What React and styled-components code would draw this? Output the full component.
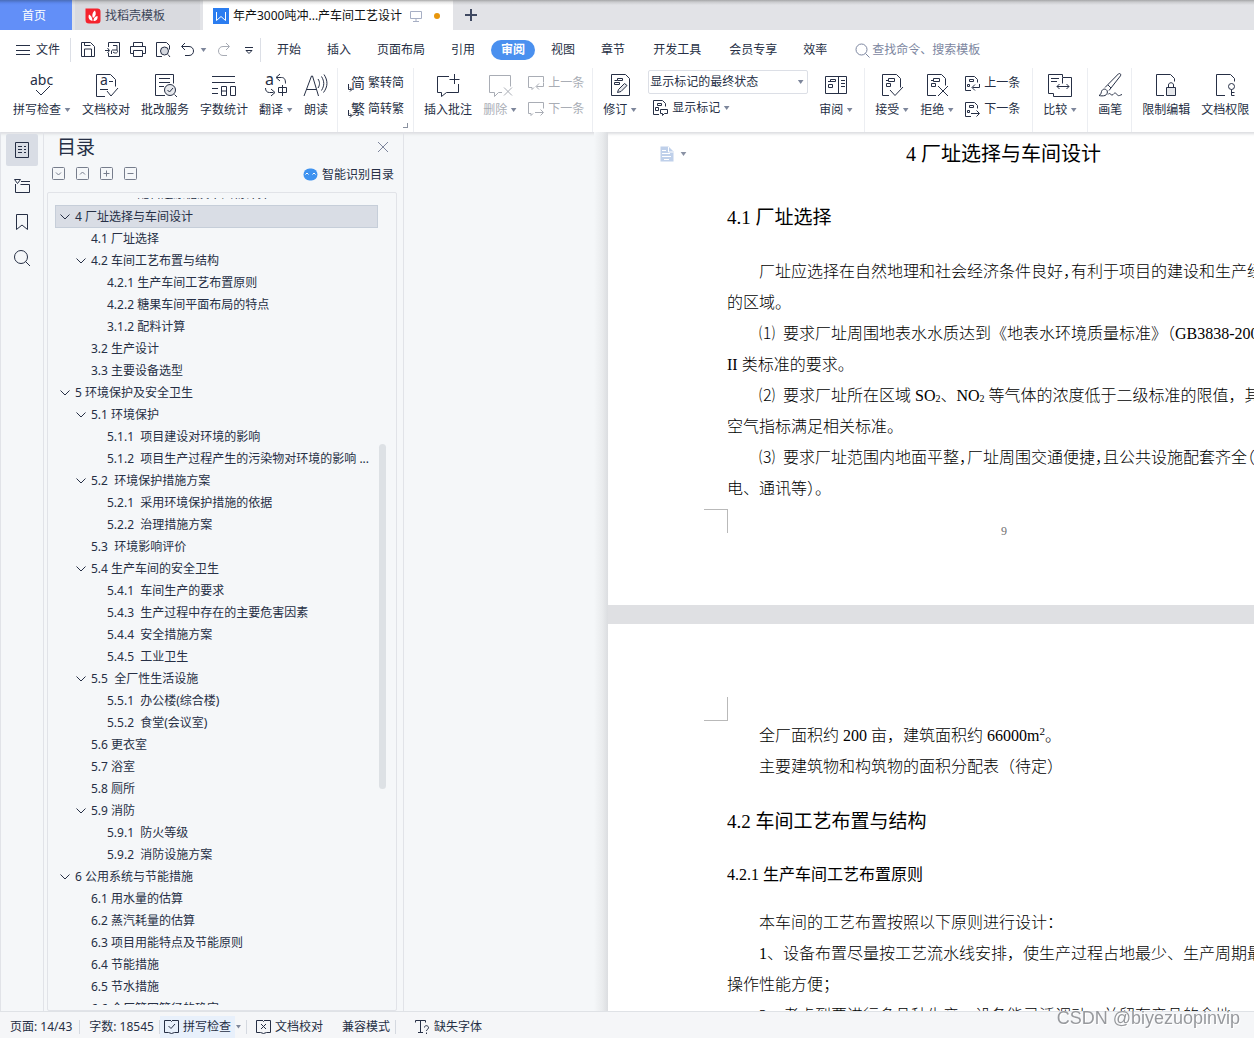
import React from 'react';
import styled, { createGlobalStyle, css } from 'styled-components';

const GlobalStyle = createGlobalStyle`
  * {
    box-sizing: border-box;
  }
  html, body, #root {
    height: 100%;
  }
  body {
    margin: 0;
    overflow: hidden;
    font-family: "Noto Sans", "Noto Sans CJK SC", sans-serif;
    font-size: 12px;
    line-height: 16px;
    color: #262f45;
  }
  button, input, select {
    font: inherit;
    color: inherit;
    background: none;
    border: 0;
    padding: 0;
    margin: 0;
    white-space: pre;
  }
  h1, h2, h3, p, ul {
    margin: 0;
    padding: 0;
    font-weight: 400;
    list-style: none;
  }
  svg {
    display: block;
    flex: none;
    overflow: visible;
  }
`

const Window = styled.div`
  display: flex;
  flex-direction: column;
  height: 100vh;
  overflow: hidden;
  background: #f5f7f9;
`

/* ---------- tab strip ---------- */

const TabStrip = styled.div`
  display: flex;
  flex: none;
  gap: 3px;
  height: 30px;
  background: linear-gradient(#a4a5a7, #c9cacd 2px, #e2e3e7 5px);
`
const HomeTab = styled.button`
  width: 72px;
  padding: 2px 4px 0 0;
  color: #fff;
  background: linear-gradient(#4a6db8, #5b87ee 3px, #628ff8 5px);
`
const FileTab = styled.button`
  display: flex;
  align-items: center;
  gap: 4px;
  height: 30px;
  padding: 2px 0 0 10px;
  width: ${props => (props.$active ? 250 : 125)}px;
  color: ${props => (props.$active ? '#111' : '#3d4659')};
  background: ${props => (props.$active
    ? 'linear-gradient(#a9a9a9, #e4e4e4 2px, #fff 5px)'
    : 'linear-gradient(#9c9da0, #c4c5c8 2px, #d9dadf 5px)')};
`
const TabTitle = styled.span`
  flex: ${props => (props.$grow ? 1 : 'none')};
  text-align: left;
`
const UnsavedDot = styled.span`
  width: 6px;
  height: 6px;
  margin: 0 13px 0 8px;
  border-radius: 50%;
  background: #e8960c;
`
const NewTab = styled.button`
  display: grid;
  place-items: center;
  width: 30px;
`

/* ---------- menu row ---------- */

const MenuRow = styled.div`
  display: flex;
  flex: none;
  align-items: center;
  height: 38px;
  padding: 2px 0 0 15px;
  background: #fff;
`
const FileMenu = styled.button`
  display: flex;
  align-items: center;
  gap: 5px;
  height: 24px;
  padding-right: 10px;
  border-right: 1px solid #dcdfe6;
`
const QuickBar = styled.div`
  display: flex;
  align-items: center;
  gap: 9px;
  height: 24px;
  padding: 0 3px 0 9px;
  border-right: 1px solid #dcdfe6;
`
const QuickButton = styled.button`
  display: flex;
  align-items: center;
  gap: 4px;
  opacity: ${props => (props.$faded ? 0.4 : 1)};
`
const MenuTabs = styled.nav`
  display: flex;
  gap: 6px;
  padding: 0 18px 0 6px;
`
const MenuTab = styled.button`
  height: 20px;
  padding: 0 10px;
  border-radius: 10px;
  margin-left: ${props => (props.$wide ? 2 : 0)}px;
  ${props => props.$active && css`
    color: #fff;
    font-weight: 700;
    background: #4a90ef;
  `}
`
const SearchLabel = styled.label`
  display: flex;
  align-items: center;
  gap: 2px;
  flex: 1;
  color: #7c86a0;
`
const SearchInput = styled.input`
  flex: 1;
  outline: 0;
  &::placeholder {
    color: #7c86a0;
    opacity: 1;
  }
`

/* ---------- ribbon ---------- */

const Ribbon = styled.div`
  position: relative;
  display: flex;
  flex: none;
  height: 64px;
  padding-left: 3px;
  overflow: hidden;
  background: #fff;
`
const Group = styled.div`
  position: relative;
  display: flex;
  flex: none;
  gap: 11px;
  padding: 5px ${props => props.$end || 9}px 0 10px;
  border-right: 1px solid #eceef2;
`
const Tool = styled.button`
  display: flex;
  flex-direction: column;
  align-items: center;
  gap: 5px;
  height: 56px;
  color: ${props => (props.$disabled ? '#a9adb5' : 'inherit')};
`
const ToolLabel = styled.span`
  display: flex;
  align-items: center;
  gap: 3px;
`
const ToolStack = styled.div`
  display: flex;
  flex-direction: column;
  gap: 10px;
  padding-top: 2px;
`
const SmallTool = styled.button`
  display: flex;
  align-items: center;
  gap: 4px;
  height: 16px;
  color: ${props => (props.$disabled ? '#a9adb5' : 'inherit')};
`
const MarkupStack = styled.div`
  display: flex;
  flex-direction: column;
  gap: 6px;
`
const SelectBox = styled.label`
  display: flex;
  align-items: center;
  width: 160px;
  height: 24px;
  margin-top: -3px;
  padding: 0 3px 0 1px;
  border: 1px solid #dcdfe6;
  border-radius: 2px;
`
const Select = styled.select`
  flex: 1;
  appearance: none;
  outline: 0;
`
const MarkupButton = styled(SmallTool)`
  margin-left: 4px;
`
const Corner = styled.span`
  position: absolute;
  right: 5px;
  bottom: 4px;
  width: 5px;
  height: 5px;
  border: solid #8a91a0;
  border-width: 0 1px 1px 0;
`
const CaretShape = styled.span`
  width: 7px;
  height: 4px;
  background: #7d869b;
  clip-path: polygon(10% 0, 90% 0, 50% 100%);
`

/* ---------- body ---------- */

const Body = styled.div`
  display: flex;
  flex: 1;
  min-height: 0;
  box-shadow: inset 0 4px 3px -2px #dcdde0;
`
const Rail = styled.nav`
  display: flex;
  flex: none;
  flex-direction: column;
  gap: 4px;
  width: 44px;
  padding: 2px 5px;
  border: solid #e1e3e8;
  border-width: 0 1px;
`
const RailButton = styled.button`
  display: grid;
  place-items: center;
  width: 32px;
  height: 32px;
  border-radius: 2px;
  background: ${props => (props.$active ? '#d9dde5' : 'none')};
`
const Panel = styled.aside`
  display: flex;
  flex: none;
  flex-direction: column;
  width: 360px;
  padding: 0 6px 0 3px;
  border-right: 1px solid #e1e3e8;
`
const PanelHeader = styled.div`
  display: flex;
  align-items: center;
  justify-content: space-between;
  height: 30px;
  padding: 0 8px 0 10px;
`
const PanelTitle = styled.h2`
  font-size: 19px;
  line-height: 28px;
`
const PanelTools = styled.div`
  display: flex;
  align-items: center;
  gap: 11px;
  height: 30px;
  padding: 0 3px 7px 5px;
`
const SmartButton = styled.button`
  display: flex;
  align-items: center;
  gap: 4px;
  margin-left: auto;
  padding-top: 2px;
`
const TreeBox = styled.div`
  display: flex;
  flex: 1;
  gap: 1px;
  min-height: 0;
  padding: 5px 10px 5px 7px;
  border: 1px solid #e1e3e8;
  border-radius: 2px;
`
const TreeList = styled.ul`
  display: flex;
  flex: 1;
  flex-direction: column;
  justify-content: center;
  min-width: 0;
  overflow: hidden;
`
const TreeItem = styled.button`
  display: flex;
  align-items: center;
  gap: 5px;
  width: 100%;
  height: ${props => (props.$selected ? 23 : 22)}px;
  padding-left: ${props => props.$level * 16 - 12}px;
  border: 1px solid ${props => (props.$selected ? '#c6ced9' : 'transparent')};
  background: ${props => (props.$selected ? '#d9dde5' : 'none')};
`
const Twisty = styled.span`
  display: flex;
  justify-content: center;
  width: 10px;
`
const ScrollTrack = styled.div`
  display: flex;
  flex-direction: column;
  width: 7px;
`
const ScrollSpace = styled.div`
  flex: ${props => props.$weight};
`
const ScrollThumb = styled.div`
  flex: 344;
  border-radius: 4px;
  background: #dde1e5;
`

/* ---------- document ---------- */

const Canvas = styled.main`
  display: flex;
  flex: 1;
  min-width: 0;
  overflow: hidden;
  padding-left: 190px;
`
const PageEdge = styled.div`
  flex: none;
  width: 14px;
  background: linear-gradient(90deg, #f5f7f9, #e9ebed 60%, #dbdde0);
`
const Pages = styled.div`
  display: flex;
  flex: none;
  flex-direction: column;
  gap: 19px;
  width: 791px;
  background: #dfe0e3;
`
const Page = styled.article`
  flex: none;
  padding: 0 119px;
  background: #fff;
  box-shadow: ${props => (props.$first ? 'inset 0 4px 3px -2px #dcdde0' : 'none')};
  color: #000;
  font-family: "Liberation Serif", "Noto Sans CJK SC", serif;
  font-size: 16px;
  line-height: 31px;
  white-space: pre;
`
const TitleRow = styled.div`
  display: grid;
  grid-template-columns: 1fr auto 1fr;
  align-items: center;
  height: 44px;
  margin-left: -67px;
  margin-right: -67px;
`
const Chapter = styled.h1`
  font-size: 20px;
  line-height: 28px;
`
const PasteMark = styled.button`
  display: flex;
  align-items: center;
  gap: 6px;
  opacity: 0.9;
`
const Section = styled.h2`
  font-size: 19px;
  line-height: 28px;
  padding: ${props => props.$pad};
`
const SubSection = styled.h3`
  font-size: 16px;
  line-height: 28px;
  padding: 25px 0 18px;
`
const Line = styled.p`
  padding-left: ${props => (props.$indent ? 32 : 0)}px;
  font-weight: 300;
`
const Sub = styled.sub`
  font-size: 10px;
  line-height: 0;
  vertical-align: -1px;
`
const Sup = styled.sup`
  font-size: 11px;
  line-height: 0;
`
/* punctuation set in half an em */
const Half = styled.span`
  font-feature-settings: "halt";
`
const Footer = styled.footer`
  display: flex;
  height: 96px;
  margin: 5px 0 0 -23px;
`
const CropMark = styled.div`
  width: 24px;
  height: 24px;
  border: solid #b9b9b9;
  border-width: ${props => (props.$top ? '0 1px 1px 0' : '1px 1px 0 0')};
`
const TopMargin = styled.div`
  height: 96px;
  margin-left: -23px;
  padding-top: 73px;
`
const PageNumber = styled.span`
  flex: 1;
  padding-top: 8px;
  text-align: center;
  font-size: 12px;
  line-height: 28px;
  color: #707070;
`

/* ---------- status bar ---------- */

const StatusBar = styled.footer`
  display: flex;
  flex: none;
  align-items: center;
  height: 27px;
  padding: 3px 0 0 10px;
  border-top: 1px solid #dfe2e6;
  background: #f5f6f8;
`
const StatusItem = styled.button`
  display: flex;
  align-items: center;
  gap: 4px;
  height: 22px;
  padding: 0 4px;
  background: ${props => (props.$on ? '#e8f0fb' : 'none')};
`
const StatusText = styled.span`
  white-space: pre;
`
const StatusSep = styled.span`
  width: 1px;
  height: 14px;
  margin: 0 ${props => props.$after}px 0 ${props => props.$before}px;
  background: #d5d9e0;
`
const StatusMode = styled(StatusText)`
  margin-left: 15px;
`
const Watermark = styled.div`
  position: fixed;
  right: 14px;
  bottom: 8px;
  color: #97999d;
  font: 18px/24px "Liberation Sans", sans-serif;
  text-shadow: 1px 1px 0 #fff;
`

/* ---------- icons ---------- */

const Svg = ({ w = 24, h = 24, children }) => (
  <svg width={w} height={h} viewBox={`0 0 ${w} ${h}`} fill="none" stroke="currentColor" aria-hidden="true">
    {children}
  </svg>
)

const Glyph = ({ x, y, size, children }) => (
  <text x={x} y={y} fontSize={size} fill="currentColor" stroke="none">{children}</text>
)

const MiniDoc = () => (
  <path d="M8.5 5.5h6v3h-6zM6.5 10.5h4v3h-4zM6 7.5h2" />
)

const icons = {
  spell: <Svg><Glyph x={0} y={12} size={14}>abc</Glyph><path d="M6 17l5 5 9-9" /></Svg>,
  proof: <Svg><path d="M11 23.5H2.5v-22h14l5 5v7M6 16.5h8M13 18l4 5 7-8M15 8.5h4" /><Glyph x={6} y={12} size={14}>a</Glyph></Svg>,
  batch: <Svg><path d="M12 22.5H2.5v-21h18v9M6 5.5h11M6 9.5h11M6 13.5h5M21.5 21.5l2.500 2.500" /><circle cx="17" cy="17" r="5.500" fill="#e6e8ec" /><path d="M14.500 17l2 2 3.500-4" /></Svg>,
  count: <Svg><path d="M0 3.500h23M0 9.500h23M0 15.500h6M0 20.500h6M9.500 13.500h5v9h-5zM9.500 18h5M18.500 13.500h5v9h-5z" /></Svg>,
  translate: <Svg><Glyph x={1} y={12} size={16}>a</Glyph><path d="M16 1l-4 3.500 4 3.500M12.500 4.500h5c3 0 4 2 4 6M1.500 15c0 3 1.500 4.500 4 4.500h4M7 16l4 3.500-4 3.500M14.500 14.500h8v5h-8zM18.500 12v11" /></Svg>,
  read: <Svg><path d="M0 23L7.500 3h1l6 20M3 16.500h9M14 6c2 3 2 6 0 9M17.500 3.500c3 5 3 9 0 14M20 1.500c4 6 4 12-.5 18" /></Svg>,
  toSimple: <Svg w={16} h={16}><Glyph x={3} y={13} size={14}>简</Glyph><path d="M.5 9v5.500h3M2 12.500l2 2-2 2" /></Svg>,
  toTrad: <Svg w={16} h={16}><Glyph x={3} y={13} size={14}>繁</Glyph><path d="M.5 9v5.500h3M2 12.500l2 2-2 2" /></Svg>,
  comment: <Svg><path d="M13 3.500H1.500v16h4v4l5-4h12V11M18.500 1v10M13.500 6.500h10" /></Svg>,
  deleteComment: <Svg><path d="M14 19.500h-3.500l-4 4v-4h-5v-17h21v11M16 14.500l8 8M24 14.500l-8 8" /></Svg>,
  prevComment: <Svg w={16} h={16}><path d="M6 12.500l-2 2v-2H.500V1.500h15v6M15.500 8v3.500h-7M11 8.500l-3 3 3 3" /></Svg>,
  nextComment: <Svg w={16} h={16}><path d="M5 12.500l-2 2v-2H.500V1.500h15v6M7 11.500h8M12.500 8.500l3 3-3 3" /></Svg>,
  track: <Svg><path d="M3.500 1.500h14l4 4v17h-18z" /><path d="M9.500 5.500h5v2h-5zM6.500 9.500h5v2h-5zM6.500 7.500h3" /><path d="M9.500 19.500l1-3 6-6 2.500 2-6 6z" fill="#e6e8ec" /></Svg>,
  markup: <Svg w={16} h={16}><path d="M7 14.500H1.500V.5h9l3 3v3M5.500 3.500h4v2h-4zM3.500 7.500h3v3h-3zM8.500 9.500h7v4h-3l-2 2v-2h-2z" /></Svg>,
  pane: <Svg><path d="M1.500 3.500h21v17h-21zM14.500 3.500v17M17 7.500h4M17 10.500h4M17 13.500h4M6.500 6.500h5v2h-5zM4.500 11.500h4v3h-4zM4 8.500h3" /></Svg>,
  accept: <Svg><path d="M9 22.500H2.500v-21h14l4 4v9M10 17l5 5.500 8-8.500" /><MiniDoc /></Svg>,
  reject: <Svg><path d="M11 22.500H2.500v-21h14l4 4v7M13 13l10 10M23 13L13 23" /><MiniDoc /></Svg>,
  prevChange: <Svg w={15} h={16}><path d="M6 15.500H.5v-14h9l3 3v3M4.500 4.500h4v2h-4zM2.500 9.500h2v2h-2zM14.500 9v3.500h-7M10 9.500l-3 3 3 3" /></Svg>,
  nextChange: <Svg w={15} h={16}><path d="M6 15.500H.5v-14h9l3 3v3M4.500 4.500h4v2h-4zM2.500 9.500h2v2h-2zM6 12.500h8M11.500 9.500l3 3-3 3" /></Svg>,
  compare: <Svg><path d="M14.500 4V1.500H.500v19h5M3 5.500h8M3 8.500h6M14.500 4.500h9v19h-18v-3M14.500 4.500v6M9 13.500h12M11.500 11l-2.500 2.500 2.500 2.500M18.500 11l2.500 2.500-2.500 2.500" /></Svg>,
  brush: <Svg><path d="M1 22.500c2-1 2-2 2.500-4 1-3 4-3 5.500-1 1 2 0 4-2 5-2 .5-4 .5-6 0zM7 14.500L20.500.8c1.500-.8 2.800.4 2 2L11 17.500M10 12l3 3M10 21.500c2-3 3 2 5 0s2-2 4 0 2 1 5 0" /></Svg>,
  lock: <Svg><path d="M10 22.500H2.500v-21h14l4 4v3" /><path d="M12.500 14.500h9v8h-9z" fill="#e6e8ec" /><path d="M14.500 14v-2c0-3 5-3 5 0v2" /></Svg>,
  permission: <Svg><path d="M12 22.500H3.500v-21h14l4 4v3" /><circle cx="18.500" cy="13.500" r="3" /><path d="M18.500 16.500v6h3M18.500 19.500h3" /></Svg>,
}

const quickIcons = [
  { name: '保存', d: 'M1.500.5h9l4 4v10h-13zM4.500 14v-7h7v7M4.500 .5v3h6' },
  { name: '输出为PDF', d: 'M3.500 5V.5h11v14h-11V11M0 8.500h4M2.500 6l2 2.500-2 2.500M6.500 12V8.500M8 3.500h4v4.500H7M12 8c2 3-2 4-4 2' },
  { name: '打印', d: 'M3.500 4V.5h9V4M3 11.500H.500v-7h15v7H13M3.500 8.500h9v6h-9z' },
  { name: '打印预览', d: 'M7 14.500H1.500V.5h10l3 3v4M13 12.500l2 2.500', circle: true },
]

const Caret = () => <CaretShape aria-hidden="true" />

const Big = ({ icon, label, caret, disabled }) => (
  <Tool $disabled={disabled}>
    {icons[icon]}
    <ToolLabel>{label}{caret && <Caret />}</ToolLabel>
  </Tool>
)

const Small = ({ icon, label, disabled }) => (
  <SmallTool $disabled={disabled}>{icons[icon]}{label}</SmallTool>
)

const menuTabs = ['开始', '插入', '页面布局', '引用', '审阅', '视图', '章节', '开发工具', '会员专享', '效率']

// [level, label, has children]
const outline = [
  [3, '3.1.1 配料还原糖及干固物计算'],
  [1, '4 厂址选择与车间设计', true],
  [2, '4.1 厂址选择'],
  [2, '4.2 车间工艺布置与结构', true],
  [3, '4.2.1 生产车间工艺布置原则'],
  [3, '4.2.2 糖果车间平面布局的特点'],
  [3, '3.1.2 配料计算'],
  [2, '3.2 生产设计'],
  [2, '3.3 主要设备选型'],
  [1, '5 环境保护及安全卫生', true],
  [2, '5.1 环境保护', true],
  [3, '5.1.1  项目建设对环境的影响'],
  [3, '5.1.2  项目生产过程产生的污染物对环境的影响 ...'],
  [2, '5.2  环境保护措施方案', true],
  [3, '5.2.1  采用环境保护措施的依据'],
  [3, '5.2.2  治理措施方案'],
  [2, '5.3  环境影响评价'],
  [2, '5.4 生产车间的安全卫生', true],
  [3, '5.4.1  车间生产的要求'],
  [3, '5.4.3  生产过程中存在的主要危害因素'],
  [3, '5.4.4  安全措施方案'],
  [3, '5.4.5  工业卫生'],
  [2, '5.5  全厂性生活设施', true],
  [3, '5.5.1  办公楼(综合楼)'],
  [3, '5.5.2  食堂(会议室)'],
  [2, '5.6 更衣室'],
  [2, '5.7 浴室'],
  [2, '5.8 厕所'],
  [2, '5.9 消防', true],
  [3, '5.9.1  防火等级'],
  [3, '5.9.2  消防设施方案'],
  [1, '6 公用系统与节能措施', true],
  [2, '6.1 用水量的估算'],
  [2, '6.2 蒸汽耗量的估算'],
  [2, '6.3 项目用能特点及节能原则'],
  [2, '6.4 节能措施'],
  [2, '6.5 节水措施'],
  [2, '6.6 全厂管网管径的确定'],
]

const levelTools = [
  ['展开', 'M4 5.500l2.500 2.500L9 5.500'],
  ['收起', 'M4 7.500L6.500 5 9 7.500'],
  ['提升', 'M3.500 6.500h6M6.500 3.500v6'],
  ['降低', 'M3.500 6.500h6'],
]

function Tabs() {
  return (
    <TabStrip>
      <HomeTab>首页</HomeTab>
      <FileTab>
        <Svg w={16} h={16}>
          <path d="M4 .5h8.500a3 3 0 0 1 3 3v9a3 3 0 0 1-3 3H4a3.500 3.500 0 0 1-3.500-3.500V.5z" fill="#f5222d" stroke="none" />
          <path d="M7.500 13C3.500 12 3 9 4 6.500c2 1 3.500 3 3.500 6.500zM8 10C6.500 6.500 8 4 10 2.500c1.500 3 1 5.500-2 7.500zM8.500 13c0-3 1.500-4.500 4-5 .5 3-1 5-4 5z" fill="#fff" stroke="none" />
        </Svg>
        <TabTitle>找稻壳模板</TabTitle>
      </FileTab>
      <FileTab $active>
        <Svg w={16} h={16}>
          <path d="M0 0h16v16H0z" fill="#2b7df0" stroke="none" />
          <path d="M3.500 4v8.500l4.500-4 4.500 4V4" stroke="#fff" />
        </Svg>
        <TabTitle $grow>年产3000吨冲...产车间工艺设计</TabTitle>
        <Svg w={12} h={12}>
          <path d="M.5 1.500h11v7H.500zM6 8.500v3M3 11.500h6" stroke="#a7afc4" />
        </Svg>
        <UnsavedDot />
      </FileTab>
      <NewTab aria-label="新建">
        <Svg w={12} h={12}><path d="M6 0v12M0 6h12" stroke="#3f4961" strokeWidth="2" /></Svg>
      </NewTab>
    </TabStrip>
  )
}

function Menu() {
  return (
    <MenuRow>
      <FileMenu>
        <Svg w={16} h={12}><path d="M1 1.500h14M1 6.500h14M1 10.500h14" /></Svg>
        文件
      </FileMenu>
      <QuickBar>
        {quickIcons.map(q => (
          <QuickButton key={q.name} aria-label={q.name}>
            <Svg w={16} h={16}>
              <path d={q.d} />
              {q.circle && <circle cx="9.500" cy="9" r="4" fill="#d5d8df" />}
            </Svg>
          </QuickButton>
        ))}
        <QuickButton aria-label="撤销">
          <Svg w={16} h={16}><path d="M5 1L1.500 4.500 5 8M2 4.500h7c6 0 6 9 0 9H5" /></Svg>
          <Caret />
        </QuickButton>
        <QuickButton $faded aria-label="恢复">
          <Svg w={16} h={16}><path d="M10 1l3.500 3.500L10 8M13 4.500H7c-6 0-6 9 0 9h4" /></Svg>
        </QuickButton>
        <QuickButton aria-label="自定义快速访问">
          <Svg w={16} h={16}><path d="M4 5.500h8M5 8.500h6l-3 3z" /></Svg>
        </QuickButton>
      </QuickBar>
      <MenuTabs>
        {menuTabs.map(t => (
          <MenuTab key={t} $active={t === '审阅'} $wide={t === '开发工具' || t === '会员专享'}>{t}</MenuTab>
        ))}
      </MenuTabs>
      <SearchLabel>
        <Svg w={15} h={15}><circle cx="6.500" cy="6.500" r="5.500" /><path d="M10.500 10.500l4 4" /></Svg>
        <SearchInput aria-label="搜索" placeholder="查找命令、搜索模板" />
      </SearchLabel>
    </MenuRow>
  )
}

function ReviewRibbon() {
  return (
    <Ribbon>
      <Group>
        <Big icon="spell" label="拼写检查" caret />
        <Big icon="proof" label="文档校对" />
        <Big icon="batch" label="批改服务" />
        <Big icon="count" label="字数统计" />
        <Big icon="translate" label="翻译" caret />
        <Big icon="read" label="朗读" />
      </Group>
      <Group>
        <ToolStack>
          <Small icon="toSimple" label="繁转简" />
          <Small icon="toTrad" label="简转繁" />
        </ToolStack>
        <Corner />
      </Group>
      <Group $end={8}>
        <Big icon="comment" label="插入批注" />
        <Big icon="deleteComment" label="删除" caret disabled />
        <ToolStack>
          <Small icon="prevComment" label="上一条" disabled />
          <Small icon="nextComment" label="下一条" disabled />
        </ToolStack>
      </Group>
      <Group $end={11}>
        <Big icon="track" label="修订" caret />
        <MarkupStack>
          <SelectBox>
            <Select aria-label="显示状态"><option>显示标记的最终状态</option></Select>
            <Caret />
          </SelectBox>
          <MarkupButton>
            {icons.markup}
            <ToolLabel>显示标记<Caret /></ToolLabel>
          </MarkupButton>
        </MarkupStack>
        <Big icon="pane" label="审阅" caret />
      </Group>
      <Group $end={12}>
        <Big icon="accept" label="接受" caret />
        <Big icon="reject" label="拒绝" caret />
        <ToolStack>
          <Small icon="prevChange" label="上一条" />
          <Small icon="nextChange" label="下一条" />
        </ToolStack>
      </Group>
      <Group $end={10}>
        <Big icon="compare" label="比较" caret />
      </Group>
      <Group>
        <Big icon="brush" label="画笔" />
      </Group>
      <Group>
        <Big icon="lock" label="限制编辑" />
        <Big icon="permission" label="文档权限" />
      </Group>
    </Ribbon>
  )
}

function OutlinePanel() {
  return (
    <Panel>
      <PanelHeader>
        <PanelTitle>目录</PanelTitle>
        <button aria-label="关闭">
          <Svg w={12} h={12}><path d="M1 1l10 10M11 1L1 11" stroke="#7d859c" /></Svg>
        </button>
      </PanelHeader>
      <PanelTools>
        {levelTools.map(([name, d]) => (
          <button key={name} aria-label={name}>
            <Svg w={13} h={13}><rect x=".5" y=".5" width="12" height="12" rx="1" stroke="#767d8c" /><path d={d} stroke="#767d8c" /></Svg>
          </button>
        ))}
        <SmartButton>
          <Svg w={15} h={13}>
            <rect x=".5" y=".5" width="14" height="12" rx="6" fill="#3f93f0" stroke="none" />
            <path d="M2.500 6.500L4 5l1.500 1.500M9.500 6.500L11 5l1.500 1.500" stroke="#fff" />
          </Svg>
          智能识别目录
        </SmartButton>
      </PanelTools>
      <TreeBox>
        <TreeList>
          {outline.map(([level, label, open], i) => (
            <li key={label}>
              <TreeItem $level={level} $selected={i === 1}>
                <Twisty>{open && <Svg w={10} h={6}><path d="M.5 .5L5 5 9.500 .5" /></Svg>}</Twisty>
                {label}
              </TreeItem>
            </li>
          ))}
        </TreeList>
        <ScrollTrack>
          <ScrollSpace $weight={246} />
          <ScrollThumb />
          <ScrollSpace $weight={216} />
        </ScrollTrack>
      </TreeBox>
    </Panel>
  )
}

function Document() {
  return (
    <Canvas>
      <PageEdge />
      <Pages>
        <Page $first>
          <TitleRow>
            <PasteMark aria-label="段落布局">
              <Svg w={14} h={16}>
                <path d="M.5 .5h8l5 5v10H.500z" fill="#b9cce8" stroke="none" />
                <path d="M8.500 1v5h5M2 4.500h4M2 7.500h8M2 10.500h9M4 13.500h5" stroke="#fff" />
              </Svg>
              <Caret />
            </PasteMark>
            <Chapter>4 厂址选择与车间设计</Chapter>
          </TitleRow>
          <Section $pad="28px 0 24px">4.1 厂址选择</Section>
          <Line $indent>厂址应选择在自然地理和社会经济条件良好<Half>，</Half>有利于项目的建设和生产经</Line>
          <Line>的区域。</Line>
          <Line $indent>⑴  要求厂址周围地表水水质达到《地表水环境质量标准》（GB3838-2002</Line>
          <Line>II 类标准的要求。</Line>
          <Line $indent>⑵  要求厂址所在区域 SO<Sub>2</Sub>、NO<Sub>2</Sub> 等气体的浓度低于二级标准的限值，其</Line>
          <Line>空气指标满足相关标准。</Line>
          <Line $indent>⑶  要求厂址范围内地面平整<Half>，</Half>厂址周围交通便捷<Half>，</Half>且公共设施配套齐全<Half>（</Half></Line>
          <Line>电、通讯等）。</Line>
          <Footer>
            <CropMark />
            <PageNumber>9</PageNumber>
          </Footer>
        </Page>
        <Page>
          <TopMargin><CropMark $top /></TopMargin>
          <Line $indent>全厂面积约 200 亩，建筑面积约 66000m<Sup>2</Sup>。</Line>
          <Line $indent>主要建筑物和构筑物的面积分配表（待定）</Line>
          <Section $pad="26px 0 0">4.2 车间工艺布置与结构</Section>
          <SubSection>4.2.1 生产车间工艺布置原则</SubSection>
          <Line $indent>本车间的工艺布置按照以下原则进行设计：</Line>
          <Line $indent>1、设备布置尽量按工艺流水线安排，使生产过程占地最少、生产周期最</Line>
          <Line>操作性能方便；</Line>
          <Line $indent>2、考虑到要进行多品种生产，设备能灵活调动，并留有产品的余地，</Line>
        </Page>
      </Pages>
    </Canvas>
  )
}

function Status() {
  return (
    <StatusBar>
      <StatusText>页面: 14/43</StatusText>
      <StatusSep $before={7} $after={9} />
      <StatusText>字数: 18545</StatusText>
      <StatusSep $before={5} $after={0} />
      <StatusItem $on>
        <Svg w={15} h={15}><path d="M6 1.500H.500v12h4l3 1 3-1h4v-12H9M4.500 7l2.500 2.500L11 5M6 1l1.500 1.500L9 1" /></Svg>
        拼写检查
      </StatusItem>
      <Caret />
      <StatusSep $before={4} $after={5} />
      <StatusItem>
        <Svg w={15} h={15}><path d="M6 1.500H.500v12h4l3 1 3-1h4v-12H9M5 5l5 5M10 5l-5 5M6 1l1.500 1.500L9 1" /></Svg>
        文档校对
      </StatusItem>
      <StatusMode>兼容模式</StatusMode>
      <StatusSep $before={5} $after={14} />
      <StatusItem>
        <Svg w={16} h={16}><path d="M1.500 3.500v-2h10v2M6.500 1.500v12M4 13.500h5M10.500 8.500c0-3 4.500-2 4 .5-.5 1.500-2 1.500-2 3M12.500 13.500v1.500" /></Svg>
        缺失字体
      </StatusItem>
    </StatusBar>
  )
}

export default function App() {
  return (
    <Window>
      <GlobalStyle />
      <Tabs />
      <Menu />
      <ReviewRibbon />
      <Body>
        <Rail>
          <RailButton $active aria-label="目录">
            <Svg w={16} h={18}><path d="M1.500 1.500h13v15h-13zM4 5.500h4M4 8.500h4M4 11.500h4M10 5.500h2M10 8.500h2M10 11.500h2" /></Svg>
          </RailButton>
          <RailButton aria-label="章节">
            <Svg w={16} h={16}><path d="M.5 1.500h6l-3 4zM7 3.500h9M1.500 6v8.500h14v-8h-9" /></Svg>
          </RailButton>
          <RailButton aria-label="书签">
            <Svg w={14} h={18}><path d="M1.500 1.500h11v15L7 12l-5.500 4.500z" /></Svg>
          </RailButton>
          <RailButton aria-label="查找">
            <Svg w={18} h={18}><circle cx="8" cy="8" r="6.500" /><path d="M12.500 12.500l4.500 4.500" /></Svg>
          </RailButton>
        </Rail>
        <OutlinePanel />
        <Document />
      </Body>
      <Status />
      <Watermark>CSDN @biyezuopinvip</Watermark>
    </Window>
  )
}
